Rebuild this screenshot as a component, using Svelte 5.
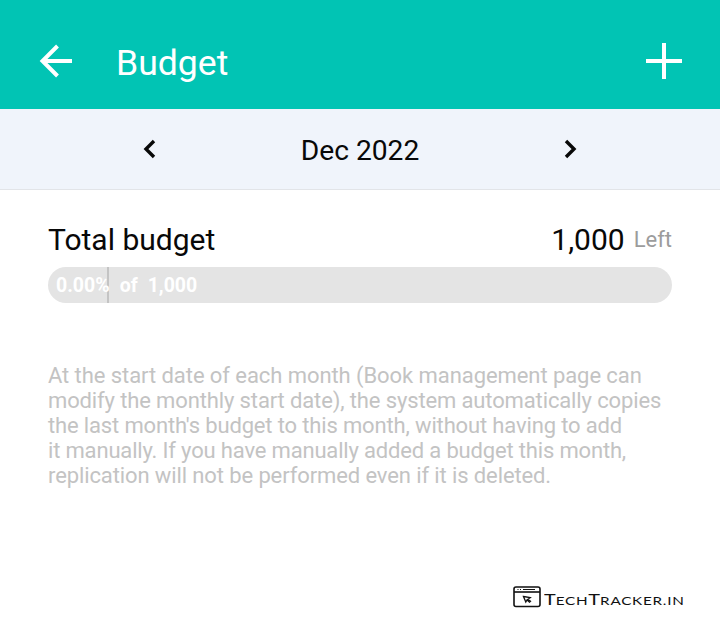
<script>
  const note = [
    { text: 'At the start date of each month (Book management page can', tracking: -0.07 },
    { text: 'modify the monthly start date), the system automatically copies', tracking: -0.13 },
    { text: "the last month's budget to this month, without having to add", tracking: -0.15 },
    { text: 'it manually. If you have manually added a budget this month,', tracking: -0.17 },
    { text: 'replication will not be performed even if it is deleted.', tracking: -0.11 }
  ];
</script>

<div class="screen">
  <header>
    <button aria-label="Back">
      <svg width="34" height="34" viewBox="0 0 34 34"><path d="M18.5 2 3.500 17 18.500 32M3.500 17H33" /></svg>
    </button>
    <h1>Budget</h1>
    <button class="add" aria-label="Add budget">
      <svg width="36" height="36" viewBox="0 0 36 36"><path d="M18 0V36M0 18H36" /></svg>
    </button>
  </header>

  <nav>
    <button aria-label="Previous month">
      <svg width="14" height="20" viewBox="0 0 14 20"><path d="M11 2 3 10l8 8" /></svg>
    </button>
    <span class="month">Dec 2022</span>
    <button aria-label="Next month">
      <svg width="14" height="20" viewBox="0 0 14 20"><path d="m3 2 8 8-8 8" /></svg>
    </button>
  </nav>

  <main>
    <div class="summary">
      <h2>Total budget</h2>
      <span class="amount">1,000</span>
      <span class="left">Left</span>
    </div>
    <div class="bar">
      <span class="percent">0.00%</span><span class="of">of</span><span>1,000</span>
      <i class="marker"></i>
    </div>
    <p>{#each note as line}<span style:letter-spacing="{line.tracking}px">{line.text}</span>{/each}</p>
  </main>

  <footer>
    <svg width="28" height="22" viewBox="0 0 28 22">
      <rect x="1" y="1" width="26" height="19.500" rx="2" />
      <path d="M1 6H27" />
      <path class="fine" d="M4.500 3.500h1M7 3.500h1M10 3.500h12" />
      <path class="cursor" d="m10.500 10.500 6.700 1.200-2.200 1.500 2.500 2.100-1 .9-2.500-2.200-1.200 2z" />
    </svg>
    <span class="brand">T<small>ECH</small>T<small>RACKER.IN</small></span>
  </footer>
</div>

<style>
  .screen {
    box-sizing: border-box;
    width: 720px;
    height: 622px;
    display: flex;
    flex-direction: column;
    overflow: hidden;
    background: #fff;
    color: #080808;
    font-family: Roboto, 'Liberation Sans', sans-serif;
  }
  button {
    display: flex;
    padding: 0;
    border: 0;
    background: none;
    color: inherit;
  }
  svg { display: block; fill: none; stroke: currentColor; }
  h1, h2, p { margin: 0; font-weight: 400; }
  header {
    box-sizing: border-box;
    height: 109px;
    flex: none;
    display: flex;
    align-items: center;
    padding: 13px 38px 0 39px;
    background: #01c4b4;
    color: #fff;
  }
  header svg { stroke-width: 4; }
  h1 { margin-left: 43px; font-size: 35.600px; line-height: 42px; padding-top: 4px; }
  .add { margin-left: auto; }
  nav {
    box-sizing: border-box;
    height: 81px;
    flex: none;
    display: flex;
    align-items: center;
    justify-content: space-between;
    padding: 0 143px;
    border-bottom: 1px solid #e2e4e8;
    background: #f0f4fb;
  }
  nav svg { stroke-width: 3.4; }
  .month { font-size: 28.200px; line-height: 34px; padding-top: 4px; }
  main { padding: 32px 48px 0; }
  .summary { display: flex; align-items: flex-start; height: 45px; line-height: 36px; }
  h2 { font-size: 30px; }
  .amount { margin-left: auto; font-size: 30px; }
  .left { margin-left: 9px; font-size: 22px; color: #9c9c9c; }
  .bar {
    position: relative;
    box-sizing: border-box;
    height: 36px;
    display: flex;
    align-items: center;
    padding-left: 8px;
    border-radius: 18px;
    background: #e4e4e4;
    color: #fff;
    font-size: 19.500px;
    font-weight: 700;
  }
  .percent { z-index: 1; }
  .of { margin: 0 10px; }
  .marker { position: absolute; left: 59px; top: 0; width: 2px; height: 36px; background: #c4c4c4; }
  p { margin-top: 60px; font-size: 22px; line-height: 25px; color: #c3c3c3; }
  p span { display: block; white-space: nowrap; }
  footer {
    display: flex;
    align-items: center;
    margin: auto 0 13px 513px;
    height: 24px;
    color: #111;
  }
  footer svg { flex: none; stroke-width: 1.600; }
  .fine { stroke-width: 1.200; }
  .cursor { stroke-width: 1.300; }
  .brand {
    margin-left: 3px;
    padding-top: 5px;
    font: 16px/20px Lato, sans-serif;
    white-space: nowrap;
    transform: scaleX(1.24);
    transform-origin: left;
  }
  .brand small { font-size: 12.300px; letter-spacing: 0.600px; }
</style>
